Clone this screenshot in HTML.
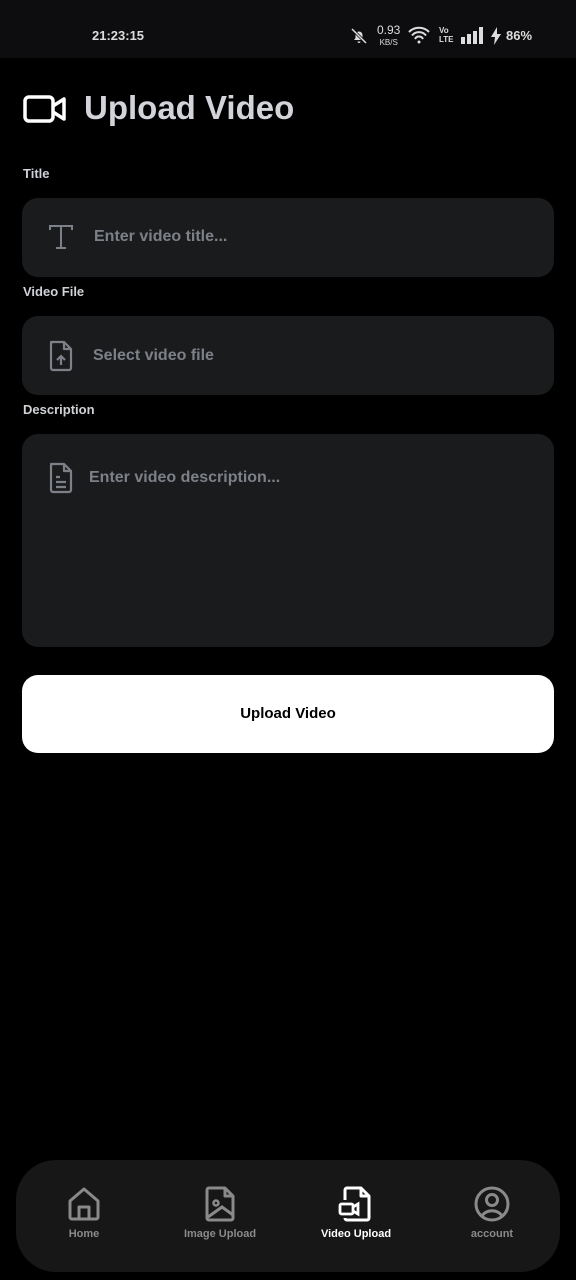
<!DOCTYPE html>
<html><head><meta charset="utf-8"><style>
*{margin:0;padding:0;box-sizing:border-box}
body{width:576px;height:1280px;background:#000;font-family:"Liberation Sans",sans-serif;position:relative;overflow:hidden;color:#fff}
.status{position:absolute;top:0;left:0;width:576px;height:58px;background:#0d0d0f}
.abs{position:absolute}
.label{position:absolute;left:23px;font-size:13px;font-weight:bold;color:#d0d2d8}
.field{position:absolute;left:22px;width:532px;background:#1a1b1c;border-radius:16px}
.ph{position:absolute;font-size:16px;font-weight:bold;color:#7d8088}
.nav{position:absolute;left:16px;top:1160px;width:544px;height:112px;background:#171717;border-radius:40px}
.ni{position:absolute;top:26px;width:120px;text-align:center;font-size:11px;font-weight:bold;color:#8a8a8a}
.ni svg{display:block;margin:0 auto 6px}
</style></head><body>
<div class="status">
<div class="abs" style="left:92px;top:28px;font-size:13px;font-weight:bold;color:#ddd">21:23:15</div>
<svg class="abs" style="left:350px;top:27px" width="18" height="18" viewBox="0 0 18 18"><path d="M4 13h10l-1.5-2V8a3.5 3.5 0 0 0-7 0v3z M7.5 14.5a1.5 1.5 0 0 0 3 0" fill="#ddd"/><path d="M2 2l14 14" stroke="#0d0d0f" stroke-width="3"/><path d="M2 2l14 14" stroke="#ddd" stroke-width="1.5"/></svg>
<div class="abs" style="left:377px;top:25px;font-size:12px;color:#ddd;line-height:11px;text-align:center">0.93<br><span style="font-size:8px">KB/S</span></div>
<svg class="abs" style="left:407px;top:26px" width="24" height="18" viewBox="0 0 24 18"><path d="M2 6a14 14 0 0 1 20 0M5 9.5a9 9 0 0 1 14 0M8 13a4.5 4.5 0 0 1 8 0" stroke="#ddd" stroke-width="2" fill="none"/><circle cx="12" cy="16" r="1.5" fill="#ddd"/></svg>
<div class="abs" style="left:439px;top:26px;font-size:8px;color:#ddd;line-height:9px;font-weight:bold">Vo<br>LTE</div>
<svg class="abs" style="left:460px;top:27px" width="24" height="17"><rect x="1" y="10" width="4" height="7" fill="#ddd"/><rect x="7" y="7" width="4" height="10" fill="#ddd"/><rect x="13" y="4" width="4" height="13" fill="#ddd"/><rect x="19" y="0" width="4" height="17" fill="#ddd"/></svg>
<svg class="abs" style="left:490px;top:27px" width="12" height="18" viewBox="0 0 12 18"><path d="M7 0L1 10h4l-1 8 7-11H7z" fill="#ddd"/></svg>
<div class="abs" style="left:506px;top:28px;font-size:13px;font-weight:bold;color:#ddd">86%</div>
</div>
<svg class="abs" style="left:23px;top:94px" width="44" height="30" viewBox="0 0 44 30"><rect x="2" y="3" width="28" height="24" rx="4" fill="none" stroke="#fff" stroke-width="3.5"/><path d="M30 12l11-7v20l-11-7" fill="none" stroke="#fff" stroke-width="3.5" stroke-linejoin="round"/></svg>
<div class="abs" style="left:84px;top:89px;font-size:33px;font-weight:bold;color:#d2d4da">Upload Video</div>

<div class="label" style="top:166px">Title</div>
<div class="field" style="top:198px;height:79px">
<svg class="abs" style="left:26px;top:26px" width="26" height="26" viewBox="0 0 26 26"><path d="M2 6V2h22v4M13 2v22M8 24h10" fill="none" stroke="#7d8088" stroke-width="2"/></svg>
<div class="ph" style="left:72px;top:30px">Enter video title...</div></div>

<div class="label" style="top:284px">Video File</div>
<div class="field" style="top:316px;height:79px">
<svg class="abs" style="left:26px;top:24px" width="26" height="32" viewBox="0 0 26 32"><path d="M3 2h13l7 7v19a2 2 0 0 1-2 2H5a2 2 0 0 1-2-2V4a2 2 0 0 1 2-2z M16 2v7h7" fill="none" stroke="#7d8088" stroke-width="2.2" stroke-linejoin="round"/><path d="M13 25v-9M9 20l4-4 4 4" fill="none" stroke="#7d8088" stroke-width="2.2"/></svg>
<div class="ph" style="left:71px;top:31px">Select video file</div></div>

<div class="label" style="top:402px">Description</div>
<div class="field" style="top:434px;height:213px">
<svg class="abs" style="left:26px;top:28px" width="26" height="32" viewBox="0 0 26 32"><path d="M3 2h13l7 7v19a2 2 0 0 1-2 2H5a2 2 0 0 1-2-2V4a2 2 0 0 1 2-2z M16 2v7h7" fill="none" stroke="#7d8088" stroke-width="2.2" stroke-linejoin="round"/><path d="M8 15h4M8 20h10M8 25h10" stroke="#7d8088" stroke-width="2.2"/></svg>
<div class="ph" style="left:67px;top:35px">Enter video description...</div></div>

<div class="abs" style="left:22px;top:675px;width:532px;height:78px;background:#fff;border-radius:16px;color:#000;font-size:15px;font-weight:bold;text-align:center;line-height:78px">Upload Video</div>

<div class="nav">
<div class="ni" style="left:8px"><svg width="36" height="36" viewBox="0 0 36 36"><path d="M4 15L18 3l14 12v16a2 2 0 0 1-2 2H6a2 2 0 0 1-2-2z M13 33V21h10v12" fill="none" stroke="#8a8a8a" stroke-width="3" stroke-linejoin="round"/></svg>Home</div>
<div class="ni" style="left:144px"><svg width="36" height="36" viewBox="0 0 36 36"><path d="M7 2h16l8 8v22a2 2 0 0 1-2 2H7a2 2 0 0 1-2-2V4a2 2 0 0 1 2-2z M23 2v8h8" fill="none" stroke="#8a8a8a" stroke-width="3" stroke-linejoin="round"/><circle cx="14" cy="17" r="2.5" fill="none" stroke="#8a8a8a" stroke-width="2.5"/><path d="M6 31l14-10 11 8" fill="none" stroke="#8a8a8a" stroke-width="3"/></svg>Image Upload</div>
<div class="ni" style="left:280px;color:#fff"><svg width="36" height="36" viewBox="0 0 36 36"><path d="M7 14V4a2 2 0 0 1 2-2h14l8 8v22a2 2 0 0 1-2 2H9a2 2 0 0 1-2-2 M23 2v8h8" fill="none" stroke="#fff" stroke-width="3" stroke-linejoin="round"/><rect x="2" y="18" width="13" height="10" rx="1.5" fill="none" stroke="#fff" stroke-width="2.8"/><path d="M15 21l5-3v10l-5-3" fill="none" stroke="#fff" stroke-width="2.8"/></svg>Video Upload</div>
<div class="ni" style="left:416px"><svg width="36" height="36" viewBox="0 0 36 36"><circle cx="18" cy="18" r="16" fill="none" stroke="#8a8a8a" stroke-width="3"/><circle cx="18" cy="14" r="5.5" fill="none" stroke="#8a8a8a" stroke-width="3"/><path d="M8 30a11 9 0 0 1 20 0" fill="none" stroke="#8a8a8a" stroke-width="3"/></svg>account</div>
</div>
</body></html>
